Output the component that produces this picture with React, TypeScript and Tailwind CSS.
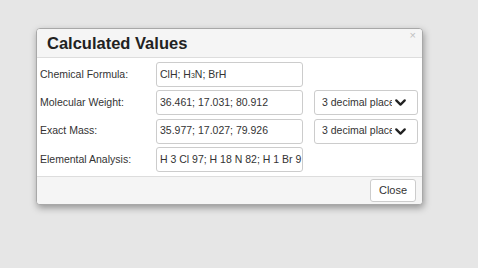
import { ChevronDown } from 'lucide-react';

const font = { fontFamily: '"Liberation Sans", Arial, sans-serif' };

function Field({ children }: { children: React.ReactNode }) {
  return (
    <div className="w-[147px] h-[25px] border border-[#cccccc] rounded-[3px] bg-white pl-[3px] flex items-center overflow-hidden whitespace-nowrap text-[10.5px] text-[#333333]">
      {children}
    </div>
  );
}

function Decimals() {
  return (
    <div className="ml-[11px] w-[104px] h-[25px] border border-[#cccccc] rounded-[3px] bg-white pl-[7px] pr-[8px] flex items-center justify-between text-[10.5px] text-[#333333]">
      <span className="w-[70px] overflow-hidden whitespace-nowrap">3 decimal place</span>
      <ChevronDown size={17} strokeWidth={3.2} className="text-[#222222]" />
    </div>
  );
}

export default function App() {
  const rows = [
    { label: 'Chemical Formula:', value: <>ClH; H<sub className="text-[7px] align-[-2px]">3</sub>N; BrH</>, select: false },
    { label: 'Molecular Weight:', value: '36.461; 17.031; 80.912', select: true },
    { label: 'Exact Mass:', value: '35.977; 17.027; 79.926', select: true },
    { label: 'Elemental Analysis:', value: 'H 3 Cl 97; H 18 N 82; H 1 Br 9', select: false },
  ];

  return (
    <div className="w-[478px] h-[268px] bg-[#e6e6e6] pt-[28px] pl-[36px]" style={font}>
      <div className="w-[387px] border border-[#a8a8a8] rounded-[4px] bg-white shadow-[1px_3px_7px_rgba(0,0,0,0.35)] overflow-hidden">
        {/* header */}
        <div className="h-[29px] bg-[#f5f5f5] border-b border-[#dddddd] flex items-center justify-between pl-[10px] pr-[6px]">
          <span className="text-[16.5px] font-bold text-[#222222] leading-none">Calculated Values</span>
          <span className="self-start mt-[1px] text-[11px] text-[#c0c0c0] leading-none">×</span>
        </div>

        {/* body */}
        <div className="pt-[4px] pb-[4px] pl-[3px] flex flex-col gap-[3.3px]">
          {rows.map((r) => (
            <div key={r.label} className="flex items-center">
              <span className="w-[116px] text-[10.5px] text-[#333333]">{r.label}</span>
              <Field>{r.value}</Field>
              {r.select && <Decimals />}
            </div>
          ))}
        </div>

        {/* footer */}
        <div className="h-[28px] bg-[#f5f5f5] border-t border-[#dddddd] flex items-start justify-end pt-[2px] pr-[6px]">
          <button className="w-[46px] h-[23px] bg-white border border-[#cccccc] rounded-[3px] text-[11px] text-[#333333]">
            Close
          </button>
        </div>
      </div>
    </div>
  );
}
